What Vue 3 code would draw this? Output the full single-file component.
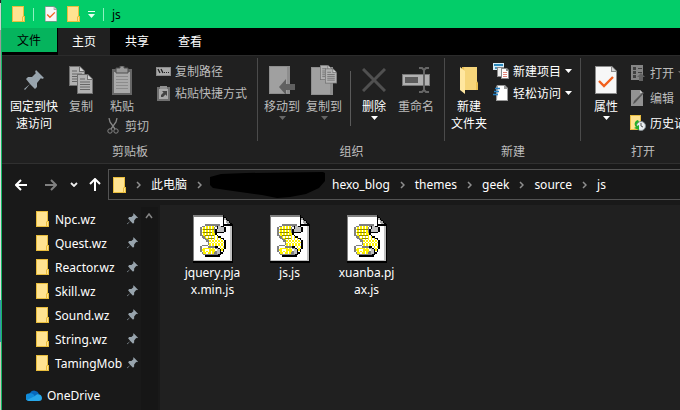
<script setup>
const tabs = ['主页', '共享', '查看']
const crumbs = ['themes', 'geek', 'source', 'js']
const folders = ['Npc.wz', 'Quest.wz', 'Reactor.wz', 'Skill.wz', 'Sound.wz', 'String.wz', 'TamingMob']
const files = [
  ['jquery.pja', 'x.min.js'],
  ['js.js'],
  ['xuanba.pj', 'ax.js'],
]

// Pixel map of the parchment scroll on the script file icon.
const palette = { g: '#808080', k: '#000', c: '#c0c0c0', w: '#fff', y: '#fff200', o: '#8c8600' }
const scroll = [
  '....gggggggggg.....',
  '..ggwywywywgkcckk..',
  '.gwywywywygwkcccck.',
  '.gyooooooogkccccck.',
  '.gwywywywygkccccck.',
  '.gyooooooygkkkkkk..',
  '.gwywywywyyk.......',
  '.ggyooooooywk......',
  '..ggywywywywykk....',
  '...ggyooooywywykk..',
  '....ggywywywywywk..',
  '.....ggywywywywywk.',
  '......gwywywywywyk.',
  '......gywywywywywk.',
  '..ggggwywywywywywk.',
  '.gwwwwgggggkkwywyk.',
  '.gwyyyyywywgckwywk.',
  '.gyywwwyyyywcckyk..',
  '.gwywywywyygcckwk..',
  '..gyywyywyggcckk...',
  '...ggggggggggkk....',
  '....kkkkkkkkkk.....',
]
const pixels = scroll.flatMap((row, y) =>
  [...row].map((c, x) => ({ x: x + 4, y: y + 6, fill: palette[c] })).filter((p) => p.fill)
)
</script>

<template>
  <svg class="sprite" width="0" height="0" aria-hidden="true">
    <symbol id="folder" viewBox="0 0 13 16">
      <path d="M0 0h12v10h1v6H0z" fill="#e9bd3c" />
      <path d="M1 1h10v9l-1 1v4H1z" fill="#ffe391" />
      <path d="M11 11h1v4h-1z" fill="#ffe391" />
    </symbol>
    <symbol id="check-doc" viewBox="0 0 22 28">
      <path d="M0 0h17l5 5v23H0z" fill="#8c8c8c" />
      <path d="M1 1h15v5h5v21H1z" fill="#f7f7f7" />
      <path d="M17 1l4 4h-4z" fill="#d5d5d5" />
      <path d="M4 15l5 5 9-9" fill="none" stroke="#f2601d" stroke-width="2.4" />
    </symbol>
    <symbol id="pin" viewBox="0 0 20 21">
      <path d="M12 0l8 8-2 1-1-1-4 5v4l-2 2-5-5-5 6-1-1 6-5-4-5 2-2h4l4-4-1-1z" fill="#98a4ad" />
    </symbol>
    <symbol id="page" viewBox="0 0 16 20">
      <path d="M0 0h11l5 5v15H0z" fill="#707070" />
      <path d="M1 1h9v5h5v13H1z" fill="#b2b2b2" />
      <path d="M11 1l4 4h-4z" fill="#d2d2d2" />
      <path d="M3 5h5M3 8h10M3 10.500h10M3 13h10M3 15.500h10" stroke="#666" />
    </symbol>
    <symbol id="down" viewBox="0 0 7 4">
      <path d="M0 0h7L3.500 4z" fill="currentColor" />
    </symbol>
    <symbol id="chevron" viewBox="0 0 5 8">
      <path d="M1 1l3 3-3 3" fill="none" stroke="#8e8e8e" stroke-width="1.500" />
    </symbol>
    <symbol id="script" viewBox="0 0 27 32">
      <g shape-rendering="crispEdges">
        <path d="M0 0h21v1h1v1h1v1h1v1h1v1h1v1h1v26H0z" fill="#000" />
        <path d="M0 0h20v1H1v30H0z" fill="#808080" />
        <path d="M1 1h19v6h6v24H1z" fill="#fff" />
        <path d="M25 7h1v24H1v-1h24z" fill="#c0c0c0" />
        <path d="M21 2h1v1h1v1h1v1h1v1h-4z" fill="#a8a8a8" />
        <path d="M21 3h1v2h1v1h-2z" fill="#fff" />
        <rect v-for="p in pixels" :key="p.x + '-' + p.y" :x="p.x" :y="p.y" width="1" height="1" :fill="p.fill" />
      </g>
    </symbol>
  </svg>

  <div class="desktop">
    <div class="window">
      <header class="titlebar">
        <svg class="i-folder"><use href="#folder" /></svg>
        <span class="tick"></span>
        <button class="quick" aria-label="属性"><svg class="i-mini-doc"><use href="#check-doc" /></svg></button>
        <button aria-label="新建文件夹"><svg class="i-folder"><use href="#folder" /></svg></button>
        <button aria-label="自定义快速访问工具栏">
          <svg width="7" height="7" viewBox="0 0 7 7"><path d="M0 0h7v1H0zM0 3h7L3.500 7z" fill="#e8fff2" /></svg>
        </button>
        <span class="tick"></span>
        <h1>js</h1>
      </header>

      <nav class="tabs">
        <button class="file-tab">文件</button>
        <button v-for="(tab, i) in tabs" :key="tab" class="tab" :class="{ active: i === 0 }">{{ tab }}</button>
      </nav>

      <section class="ribbon">
        <div class="group clipboard">
          <div class="tools">
            <button class="big wide">
              <span class="art"><svg width="20" height="21"><use href="#pin" /></svg></span>
              <span>固定到快<br />速访问</span>
            </button>
            <button class="big narrow dim">
              <span class="art">
                <svg width="24" height="28" viewBox="0 0 24 28">
                  <use href="#page" width="16" height="20" />
                  <use href="#page" x="8" y="8" width="16" height="20" />
                </svg>
              </span>
              <span>复制</span>
            </button>
            <div class="paste-stack">
              <button class="big narrow dim">
                <span class="art">
                  <svg width="20" height="29" viewBox="0 0 20 29">
                    <path d="M0 3h20v26H0z" fill="#666" />
                    <path d="M2 6h16v21H2z" fill="#aaa" />
                    <path d="M4 2h4V0h4v2h4v5H4z" fill="#999" stroke="#4e4e4e" />
                    <path d="M4 10.500h12M4 13.500h12M4 16.500h12M4 19.500h12M4 22.500h12" stroke="#8c8c8c" />
                  </svg>
                </span>
                <span>粘贴</span>
              </button>
              <button class="small dim cut">
                <span class="glyph">
                  <svg width="12" height="16" viewBox="0 0 12 16" fill="none" stroke="#858585">
                    <path d="M2 0l1 4 5 7M10 0L9 4l-5 7" stroke-width="1.300" />
                    <circle cx="3" cy="13" r="2.200" /><circle cx="9" cy="13" r="2.200" />
                  </svg>
                </span>
                剪切
              </button>
            </div>
            <div class="stack">
              <button class="small dim">
                <span class="glyph">
                  <svg width="15" height="9" viewBox="0 0 15 9">
                    <path d="M0 0h15v9H0z" fill="#8c8c8c" /><path d="M1 1h13v7H1z" fill="#aaa" />
                    <path d="M2 2l2 4M5 2l2 4" stroke="#222" stroke-width="1.300" />
                    <path d="M8 5h1v1H8zM10 5h1v1h-1zM12 5h1v1h-1z" fill="#222" />
                  </svg>
                </span>
                复制路径
              </button>
              <button class="small dim">
                <span class="glyph">
                  <svg width="13" height="15" viewBox="0 0 13 15">
                    <path d="M0 1h13v14H0z" fill="#707070" /><path d="M2 3h9v10H2z" fill="#aaa" />
                    <path d="M3 0h7v3H3z" fill="#909090" />
                    <path d="M5 5h5v5L8.500 8.500 6 11H4V9l2.500-2.500z" fill="#444" />
                  </svg>
                </span>
                粘贴快捷方式
              </button>
            </div>
          </div>
          <h2>剪贴板</h2>
        </div>

        <div class="group organize">
          <div class="tools">
            <button class="big dim">
              <span class="art">
                <svg width="26" height="28" viewBox="0 0 26 28">
                  <path d="M0 0h21v28H0z" fill="#8e8e8e" /><path d="M1 1h17v26H1z" fill="#a0a0a0" />
                  <path d="M10 21l7-8v5h9v6h-9v5z" fill="#606060" />
                </svg>
              </span>
              <span>移动到</span>
              <svg class="i-down"><use href="#down" /></svg>
            </button>
            <button class="big dim">
              <span class="art">
                <svg width="26" height="30" viewBox="0 0 26 30">
                  <path d="M0 2h22v28H0z" fill="#8e8e8e" /><path d="M1 3h18v26H1z" fill="#a0a0a0" />
                  <use href="#page" x="9" width="12" height="15" />
                  <use href="#page" x="14" y="3" width="12" height="16" />
                </svg>
              </span>
              <span>复制到</span>
              <svg class="i-down"><use href="#down" /></svg>
            </button>
            <span class="divider"></span>
            <button class="big">
              <span class="art">
                <svg width="24" height="24" viewBox="0 0 24 24"><path d="M1 1l22 22M23 1L1 23" stroke="#505050" stroke-width="3" /></svg>
              </span>
              <span>删除</span>
              <svg class="i-down"><use href="#down" /></svg>
            </button>
            <button class="big dim">
              <span class="art">
                <svg width="28" height="26" viewBox="0 0 28 26">
                  <path d="M0 7h28v12H0z" fill="#777" /><path d="M1 8h26v10H1z" fill="#b0b0b0" /><path d="M3 10h13v6H3z" fill="#5c5c5c" />
                  <path d="M17 1h3l2 2 2-2h3M22 3v20M17 25h3l2-2 2 2h3" fill="none" stroke="#666" stroke-width="2" />
                </svg>
              </span>
              <span>重命名</span>
            </button>
          </div>
          <h2>组织</h2>
        </div>

        <div class="group create">
          <div class="tools">
            <button class="big">
              <span class="art">
                <svg width="18" height="27" viewBox="0 0 18 27">
                  <path d="M2 0h15v14l1 2v7H3z" fill="#e8bf53" /><path d="M4 0h13v15h-1v8H5z" fill="#f6d57a" />
                  <path d="M0 0l5 4v23l-5-4z" fill="#ffe7a0" />
                </svg>
              </span>
              <span>新建<br />文件夹</span>
            </button>
            <div class="stack">
              <button class="small">
                <span class="glyph">
                  <svg width="16" height="16" viewBox="0 0 16 16">
                    <path d="M0 0h11v7H0z" fill="#d8edf8" /><path d="M1 1h9v2H1z" fill="#2c89bd" /><path d="M2 4h2v2H2zM6 4h2v2H6z" fill="#5194b7" />
                    <path d="M4 4h7v10H4z" fill="#888" /><path d="M5 5h5v8H5z" fill="#eee" />
                    <path d="M8 5h6l2 2v9H8z" fill="#888" /><path d="M9 6h4v2h2v7H9z" fill="#fff" />
                    <path d="M10 9.500h4M10 11.500h4M10 13.500h4" stroke="#e28378" />
                  </svg>
                </span>
                新建项目<svg class="i-down"><use href="#down" /></svg>
              </button>
              <button class="small">
                <span class="glyph">
                  <svg width="16" height="16" viewBox="0 0 16 16">
                    <path d="M4 0h8l3 3v13H3V2z" fill="#999" /><path d="M5 1h6v3h3v11H4z" fill="#fff" />
                    <path d="M2 3.500h5M1 6.500h5M0 9.500h5" stroke="#2380c4" stroke-width="1.300" />
                  </svg>
                </span>
                轻松访问<svg class="i-down"><use href="#down" /></svg>
              </button>
            </div>
          </div>
          <h2>新建</h2>
        </div>

        <div class="group open">
          <div class="tools">
            <button class="big">
              <span class="art"><svg width="22" height="28"><use href="#check-doc" /></svg></span>
              <span>属性</span>
              <svg class="i-down"><use href="#down" /></svg>
            </button>
            <div class="stack loose">
              <button class="small dim">
                <span class="glyph">
                  <svg width="14" height="16" viewBox="0 0 14 16">
                    <path d="M0 0h12v15H0z" fill="#858585" />
                    <path d="M2 2h3v3H2zM2 6h3v3H2zM2 10h3v3H2zM7 3h4v1H7zM7 7h4v1H7z" fill="#414141" />
                    <path d="M10 8l4 4h-2v4H8v-4H6z" fill="#636363" />
                  </svg>
                </span>
                打开<svg class="i-down"><use href="#down" /></svg>
              </button>
              <button class="small dim">
                <span class="glyph">
                  <svg width="14" height="16" viewBox="0 0 14 16">
                    <path d="M0 0h9l3 3v13H0z" fill="#929292" /><path d="M9 0v3h3z" fill="#c4c4c4" />
                    <path d="M13 3L4 13l-2 1 1-3 9-9z" fill="#555" />
                  </svg>
                </span>
                编辑
              </button>
              <button class="small">
                <span class="glyph">
                  <svg width="16" height="16" viewBox="0 0 16 16">
                    <path d="M0 0h11v15H0z" fill="#e8bd42" /><path d="M1 1h9v13H1z" fill="#ffe391" />
                    <circle cx="11" cy="11" r="4.500" fill="#e9eef0" stroke="#858d92" />
                    <path d="M11 8v3l2 1" fill="none" stroke="#555" />
                    <path d="M8 5c-4 1-4 5-2 7l-2 1 5 2V10l-2 1c-1-2 0-3 2-4z" fill="#23ad2c" />
                  </svg>
                </span>
                历史记录
              </button>
            </div>
          </div>
          <h2>打开</h2>
        </div>
      </section>

      <div class="location">
        <button aria-label="返回"><svg width="12" height="12" viewBox="0 0 12 12"><path d="M12 6H1M6 1L1 6l5 5" fill="none" stroke="#fff" stroke-width="2" /></svg></button>
        <button aria-label="前进"><svg width="12" height="12" viewBox="0 0 12 12"><path d="M0 6h11M6 1l5 5-5 5" fill="none" stroke="#808080" stroke-width="2" /></svg></button>
        <button class="recent" aria-label="最近浏览的位置"><svg width="8" height="5" viewBox="0 0 8 5"><path d="M1 1l3 3 3-3" fill="none" stroke="#eee" stroke-width="1.800" /></svg></button>
        <button class="up" aria-label="上移"><svg width="12" height="13" viewBox="0 0 12 13"><path d="M6 13V1M1 6l5-5 5 5" fill="none" stroke="#fff" stroke-width="2" /></svg></button>
        <nav class="address">
          <svg class="i-folder"><use href="#folder" /></svg>
          <svg class="i-chevron"><use href="#chevron" /></svg>
          <a href="#">此电脑</a>
          <svg class="i-chevron"><use href="#chevron" /></svg>
          <svg class="redacted" width="116" height="26" viewBox="0 0 116 26">
            <path d="M0 5L11 2l25-1 77-1 2 1v8l-6 7-13 6-16 3-13 1-15-3-36-5L3 16l-3-3z" fill="#000" />
          </svg>
          <a href="#">hexo_blog</a>
          <template v-for="crumb in crumbs" :key="crumb">
            <svg class="i-chevron"><use href="#chevron" /></svg>
            <a href="#">{{ crumb }}</a>
          </template>
        </nav>
      </div>

      <div class="body">
        <aside class="sidebar">
          <ul>
            <li v-for="name in folders" :key="name">
              <a href="#">
                <svg class="i-folder"><use href="#folder" /></svg>
                <span>{{ name }}</span>
                <svg class="i-pin"><use href="#pin" /></svg>
              </a>
            </li>
            <li class="cloud">
              <a href="#">
                <svg width="16" height="11" viewBox="0 0 16 11">
                  <path d="M4 3a5 5 0 0 1 9 1l-5 4-6-1z" fill="#0868bb" />
                  <path d="M3 3.500c3-1 5 1 6 3L3 11A3.700 3.700 0 0 1 3 3.500z" fill="#118cda" />
                  <path d="M9 6c2-3 7-2 7 2 0 2-1 3-3 3H3c-1 0-2-1-2-1z" fill="#28a8ea" />
                </svg>
                <span>OneDrive</span>
              </a>
            </li>
          </ul>
          <div class="scrollbar">
            <svg width="8" height="6" viewBox="0 0 8 6"><path d="M1 5l3-4 3 4" fill="none" stroke="#858585" stroke-width="1.500" /></svg>
          </div>
        </aside>
        <main class="files">
          <a v-for="lines in files" :key="lines[0]" href="#" class="file">
            <svg width="40" height="48"><use href="#script" /></svg>
            <span v-for="line in lines" :key="line">{{ line }}</span>
          </a>
        </main>
      </div>
    </div>
  </div>
</template>

<style>
html,
body {
  background: #191919;
  overflow: hidden;
}
</style>

<style scoped>
.desktop {
  display: flex;
  min-height: 100vh;
  box-sizing: border-box;
  padding-left: 1px;
  background: linear-gradient(#222 3px, #cfd3d1 3px 30px, #999 30px 80px, #d9dcda 80px 300px, #3f8fb0 300px 342px, #c9c4b8 342px);
  font: 12px/17px "Noto Sans", "Noto Sans CJK SC", sans-serif;
  color: #fff;
}
.sprite {
  position: absolute;
}
.window {
  flex: 1;
  min-width: 0;
  display: flex;
  flex-direction: column;
  overflow: hidden;
  border-left: 1px solid #12b866;
  background: #191919;
}
svg {
  display: block;
  flex: none;
}
button {
  margin: 0;
  padding: 0;
  border: 0;
  background: none;
  font: inherit;
  color: inherit;
}
a {
  color: inherit;
  text-decoration: none;
}
h1,
h2 {
  margin: 0;
  font: inherit;
}
.i-folder {
  width: 13px;
  height: 16px;
}
.i-mini-doc {
  width: 12px;
  height: 16px;
}
.i-down {
  width: 7px;
  height: 4px;
}
.i-chevron {
  width: 5px;
  height: 8px;
}
.i-pin {
  width: 11px;
  height: 12px;
}

.titlebar {
  display: flex;
  align-items: center;
  gap: 8px;
  height: 28px;
  padding-left: 10px;
  background: #03cd69;
  color: #000;
}
.tick {
  width: 1px;
  height: 13px;
  background: #8ff0c0;
}
.quick {
  padding: 0 2px 0 3px;
}

.tabs {
  display: flex;
  gap: 1px;
  height: 27px;
  background: #000;
}
.file-tab {
  height: 24px;
  padding: 0 16px 0 15px;
  background: #05b45d;
  color: #000;
}
.tab {
  padding: 0 14px;
}
.tab.active {
  background: #202020;
}

.ribbon {
  display: flex;
  border-top: 1px solid #2b2b2b;
  border-bottom: 1px solid #303030;
  background: #202020;
  height: 107px;
}
.group {
  flex: none;
  display: flex;
  flex-direction: column;
  justify-content: space-between;
  position: relative;
  padding-bottom: 3px;
  text-align: center;
  white-space: nowrap;
  color: #bdbdbd;
}
.group::after {
  content: "";
  position: absolute;
  right: 0;
  top: 2px;
  bottom: 22px;
  width: 1px;
  background: #4b4b4b;
}
.tools {
  display: flex;
  align-items: flex-start;
  color: #fff;
}
.clipboard .tools {
  padding: 0 11px 0 4px;
}
.organize .tools {
  padding: 0 8px 0 3px;
}
.create .tools {
  padding: 0 9px 0 3px;
}
.open .tools {
  padding: 0 7px 0 4px;
}
.big {
  display: flex;
  flex-direction: column;
  align-items: center;
  width: 42px;
  padding-top: 6px;
}
.big.wide {
  width: 56px;
}
.big.narrow {
  width: 38px;
}
.art {
  display: grid;
  place-items: center;
  height: 36px;
}
.big .i-down {
  margin-top: 1px;
}
.dim {
  color: #bcbcbc;
}
.dim .i-down {
  color: #666;
}
.small {
  display: flex;
  align-items: center;
  gap: 4px;
  height: 22px;
}
.glyph {
  display: grid;
  place-items: center;
  width: 16px;
}
.paste-stack {
  margin-left: 3px;
}
.cut {
  padding-left: 2px;
}
.stack {
  display: flex;
  flex-direction: column;
  padding: 4px 0 0 3px;
}
.clipboard .stack {
  padding-left: 6px;
}
.stack.loose {
  gap: 3px;
  padding-top: 6px;
}
.divider {
  width: 1px;
  height: 55px;
  margin: 15px 2px 0 5px;
  background: #5a5a5a;
}

.location {
  display: flex;
  align-items: center;
  padding: 5px 0 5px 13px;
  height: 31px;
}
.location button:nth-child(2) {
  margin-left: 18px;
}
.location .recent {
  margin-left: 13px;
}
.location .up {
  margin: 0 7px 0 11px;
}
.address {
  flex: 1;
  min-width: 0;
  display: flex;
  align-items: center;
  gap: 10px;
  height: 29px;
  padding-left: 4px;
  border: 1px solid #535353;
  border-right: 0;
  white-space: nowrap;
}
.redacted {
  margin: 0 -4px 0 -2px;
}

.body {
  flex: 1;
  display: flex;
}
.sidebar {
  display: flex;
  width: 158px;
  padding-top: 2px;
}
.sidebar ul {
  flex: 1;
  min-width: 0;
  margin: 0;
  padding: 0;
  list-style: none;
}
.sidebar a {
  display: flex;
  align-items: center;
  gap: 6px;
  height: 24px;
  padding: 0 3px 0 34px;
}
.sidebar a span {
  flex: 1;
  min-width: 0;
  white-space: nowrap;
}
.sidebar .i-pin {
  margin-left: -4px;
}
.sidebar .cloud a {
  margin-top: 8px;
  gap: 5px;
  padding-left: 24px;
}
.scrollbar {
  width: 13px;
  padding: 6px 0 0 4px;
  margin-right: 2px;
  background: #161616;
}
.files {
  flex: 1;
  display: flex;
  align-items: flex-start;
  padding: 9px 0 0 14px;
  border-top: 1px solid #202020;
  background: #202020;
}
.file {
  display: flex;
  flex-direction: column;
  align-items: center;
  width: 77px;
}
.file svg {
  margin-bottom: 1px;
}
</style>
